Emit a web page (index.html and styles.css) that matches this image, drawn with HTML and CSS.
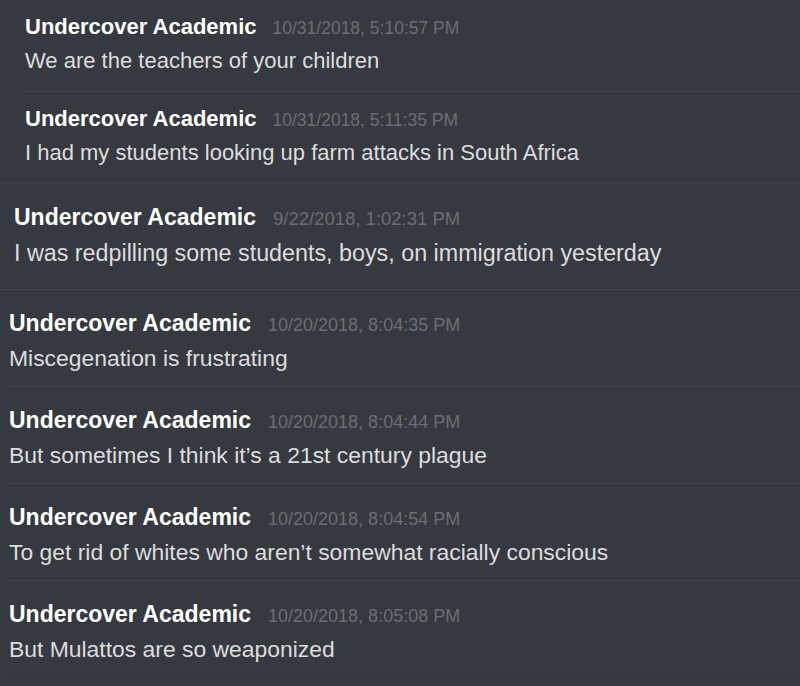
FILE: index.html
```html
<!DOCTYPE html>
<html>
<head>
<meta charset="utf-8">
<link rel="stylesheet" href="styles.css">
</head>
<body>
<div class="page">
  <section class="block block-a">
    <div class="msg">
      <div class="head"><span class="name">Undercover Academic</span><span class="time">10/31/2018, 5:10:57 PM</span></div>
      <div class="body">We are the teachers of your children</div>
    </div>
    <div class="msg">
      <div class="head"><span class="name">Undercover Academic</span><span class="time">10/31/2018, 5:11:35 PM</span></div>
      <div class="body">I had my students looking up farm attacks in South Africa</div>
    </div>
  </section>
  <section class="block block-b">
    <div class="msg">
      <div class="head"><span class="name">Undercover Academic</span><span class="time">9/22/2018, 1:02:31 PM</span></div>
      <div class="body">I was redpilling some students, boys, on immigration yesterday</div>
    </div>
  </section>
  <section class="block block-c">
    <div class="msg">
      <div class="head"><span class="name">Undercover Academic</span><span class="time">10/20/2018, 8:04:35 PM</span></div>
      <div class="body">Miscegenation is frustrating</div>
    </div>
    <div class="msg">
      <div class="head"><span class="name">Undercover Academic</span><span class="time">10/20/2018, 8:04:44 PM</span></div>
      <div class="body">But sometimes I think it’s a 21st century plague</div>
    </div>
    <div class="msg">
      <div class="head"><span class="name">Undercover Academic</span><span class="time">10/20/2018, 8:04:54 PM</span></div>
      <div class="body">To get rid of whites who aren’t somewhat racially conscious</div>
    </div>
    <div class="msg">
      <div class="head"><span class="name">Undercover Academic</span><span class="time">10/20/2018, 8:05:08 PM</span></div>
      <div class="body">But Mulattos are so weaponized</div>
    </div>
  </section>
</div>
</body>
</html>
```
FILE: styles.css
```css
html, body {
  margin: 0;
  padding: 0;
  background: #36393f;
}
body {
  font-family: "Liberation Sans", Arial, sans-serif;
  width: 800px;
  height: 686px;
  overflow: hidden;
}
.page {
  display: flex;
  flex-direction: column;
}
.msg {
  border-bottom: 1px solid #41444a;
}
.head {
  display: flex;
  align-items: baseline;
  white-space: nowrap;
}
.name {
  color: #ffffff;
  font-weight: bold;
}
.time {
  color: #6b6e73;
}
.body {
  color: #dcddde;
  white-space: nowrap;
}

/* Block A */
.block-a .msg {
  margin-left: 25px;
  padding: 13px 0 10px;
}
.block-a .msg:last-child {
  margin-left: 0;
  padding-left: 25px;
  border-bottom-color: #3c3f45;
}
.block-a .head { height: 28px; line-height: 28px; }
.block-a .name { font-size: 22px; }
.block-a .time { font-size: 17.5px; margin-left: 16px; }
.block-a .body { font-size: 22px; line-height: 40px; }

/* Block B */
.block-b .msg {
  padding: 18px 0 15px 14px;
}
.block-b .head { height: 30px; line-height: 30px; }
.block-b .name { font-size: 23px; }
.block-b .time { font-size: 18.5px; margin-left: 17px; }
.block-b .body { font-size: 23.3px; line-height: 42px; }

/* Block C */
.block-c .msg {
  margin-left: 8px;
  padding: 18px 0 8px 1px;
}
.block-c .msg:last-child {
  border-bottom-color: #33363b;
}
.block-c .head { height: 30px; line-height: 30px; }
.block-c .name { font-size: 23px; }
.block-c .time { font-size: 18px; margin-left: 17px; }
.block-c .body { font-size: 22.9px; line-height: 40px; }
```
